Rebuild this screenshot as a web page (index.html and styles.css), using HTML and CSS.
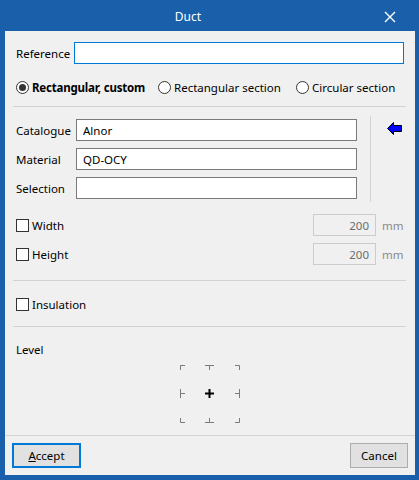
FILE: index.html
```html
<!DOCTYPE html>
<html>
<head>
<meta charset="utf-8">
<link rel="stylesheet" href="styles.css">
</head>
<body>
<div class="window">
  <div class="titlebar">
    <div class="title">Duct</div>
    <div class="close">
      <svg width="12" height="12" viewBox="0 0 12 12"><path d="M1 1 L11 11 M11 1 L1 11" stroke="#fff" stroke-width="1.4" fill="none"/></svg>
    </div>
  </div>
  <div class="content">
    <div class="main">
      <div class="row ref-row">
        <span class="ref-label">Reference</span>
        <div class="input focus"></div>
      </div>
      <div class="radio-row">
        <label class="radio-item w1"><span class="radio checked"><span class="dot"></span></span><b>Rectangular, custom</b></label>
        <label class="radio-item w2"><span class="radio"></span>Rectangular section</label>
        <label class="radio-item"><span class="radio"></span>Circular section</label>
      </div>
      <div class="sep first-sep"></div>
      <div class="group">
        <div class="fields">
          <div class="row"><span class="field-label">Catalogue</span><div class="input field">Alnor</div></div>
          <div class="row"><span class="field-label">Material</span><div class="input field">QD-OCY</div></div>
          <div class="row"><span class="field-label">Selection</span><div class="input field"></div></div>
        </div>
        <div class="vline"></div>
        <svg class="arrow" width="16" height="13" viewBox="0 0 16 13">
          <path d="M0.5 6.5 L6.5 0.5 L6.5 3.5 L14.5 3.5 L14.5 9.5 L6.5 9.5 L6.5 12.5 Z" fill="#0000ff" stroke="#000" stroke-width="1" stroke-linejoin="miter"/>
        </svg>
      </div>
      <div class="row dim-row dim-first">
        <span class="check"></span><span class="check-label">Width</span>
        <div class="spacer"></div>
        <div class="input disabled">200</div><span class="unit">mm</span>
      </div>
      <div class="row dim-row dim-second">
        <span class="check"></span><span class="check-label">Height</span>
        <div class="spacer"></div>
        <div class="input disabled">200</div><span class="unit">mm</span>
      </div>
      <div class="sep sep-dims"></div>
      <div class="ins-row">
        <span class="check"></span><span class="check-label">Insulation</span>
      </div>
      <div class="sep sep-ins"></div>
      <div class="level">Level</div>
      <svg class="marks" width="62" height="60" viewBox="0 0 62 60">
        <g stroke="#7a7a7a" stroke-width="1" fill="none">
          <path d="M1.5 6 L1.5 1.5 L6 1.5"/>
          <path d="M26 1.5 L35 1.5 M30.5 1.5 L30.5 6"/>
          <path d="M56 1.5 L60.5 1.5 L60.5 6"/>
          <path d="M1.5 25 L1.5 34 M1.5 29.5 L6 29.5"/>
          <path d="M60.5 25 L60.5 34 M60.5 29.5 L56 29.5"/>
          <path d="M1.5 54 L1.5 58.5 L6 58.5"/>
          <path d="M26 58.5 L35 58.5 M30.5 58.5 L30.5 54"/>
          <path d="M56 58.5 L60.5 58.5 L60.5 54"/>
        </g>
        <path d="M26 29.5 L35 29.5 M30.5 25 L30.5 34" stroke="#000" stroke-width="2" fill="none"/>
      </svg>
    </div>
    <div class="footer">
      <div class="btn primary"><u>A</u>ccept</div>
      <div class="btn cancel">Cancel</div>
    </div>
  </div>
</div>
</body>
</html>
```
FILE: styles.css
```css
html, body {
  margin: 0;
  padding: 0;
}
body {
  font-family: "Noto Sans", "Liberation Sans", sans-serif;
  font-size: 11.5px;
  color: #000;
}
.window {
  width: 419px;
  height: 480px;
  box-sizing: border-box;
  background: #1a5fa9;
  padding: 0 4px 5px 5px;
  display: flex;
  flex-direction: column;
}
.titlebar {
  height: 31px;
  display: flex;
  align-items: center;
  color: #fff;
}
.title {
  flex: 1;
  text-align: center;
  font-size: 12px;
  padding-left: 2px;
  padding-top: 1px;
}
.close {
  width: 46px;
  display: flex;
  justify-content: center;
  align-items: center;
}
.close svg {
  display: block;
  margin-left: -4px;
  margin-top: 2px;
}
.content {
  flex: 1;
  background: #f0f0f0;
  display: flex;
  flex-direction: column;
}
.main {
  flex: 1;
  padding: 11px 11px 0 11px;
  display: flex;
  flex-direction: column;
}
.row {
  display: flex;
  align-items: center;
  height: 22px;
}
.input {
  box-sizing: border-box;
  height: 22px;
  background: #fff;
  border: 1px solid #7a7a7a;
  display: flex;
  align-items: center;
}
.input.focus {
  flex: 1;
  border-color: #0078d7;
}
.ref-label {
  width: 58px;
}
.radio-row {
  margin-top: 13px;
  height: 20px;
  display: flex;
  align-items: center;
}
.radio-item {
  display: flex;
  align-items: center;
}
.radio-item.w1 { width: 142px; }
.radio-item.w2 { width: 138px; }
.radio-item b {
  font-weight: bold;
  letter-spacing: -0.2px;
}
.radio {
  box-sizing: border-box;
  width: 13px;
  height: 13px;
  border-radius: 50%;
  border: 1px solid #333;
  background: #fff;
  margin-right: 3px;
  display: flex;
  align-items: center;
  justify-content: center;
}
.radio .dot {
  width: 7px;
  height: 7px;
  border-radius: 50%;
  background: #333;
}
.sep {
  height: 1px;
  background: #d3d3d3;
  margin-left: -3px;
  margin-right: -2px;
}
.first-sep { margin-top: 9px; }
.group {
  margin-top: 9px;
  height: 86px;
  display: flex;
}
.fields {
  padding-top: 3px;
  display: flex;
  flex-direction: column;
  gap: 7px;
}
.field-label {
  width: 60px;
}
.input.field {
  width: 281px;
  padding-left: 6px;
}
.vline {
  width: 1px;
  background: #d3d3d3;
  margin-left: 13px;
}
.arrow {
  display: block;
  margin-left: 16px;
  margin-top: 6px;
}
.dim-first { margin-top: 12px; }
.dim-second { margin-top: 7px; }
.check {
  box-sizing: border-box;
  width: 13px;
  height: 13px;
  border: 1px solid #333;
  background: #fff;
  margin-right: 3px;
}
.spacer { flex: 1; }
.input.disabled {
  width: 63px;
  background: #f0f0f0;
  border-color: #cccccc;
  color: #6d6d6d;
  justify-content: flex-end;
  padding-right: 6px;
}
.unit {
  margin-left: 6px;
  color: #8a8a8a;
  width: 22px;
}
.sep-dims { margin-top: 15px; }
.ins-row {
  margin-top: 13px;
  height: 20px;
  display: flex;
  align-items: center;
}
.sep-ins { margin-top: 12px; }
.level {
  margin-top: 15px;
  line-height: 16px;
}
.marks {
  display: block;
  margin-top: 6px;
  margin-left: 163px;
}
.footer {
  height: 40px;
  box-sizing: border-box;
  border-top: 1px solid #d3d3d3;
  padding: 7px 7px 0 7px;
  display: flex;
  justify-content: space-between;
  align-items: flex-start;
}
.btn {
  box-sizing: border-box;
  height: 25px;
  background: #e1e1e1;
  border: 1px solid #adadad;
  display: flex;
  align-items: center;
  justify-content: center;
}
.btn.primary {
  width: 69px;
  border: 2px solid #0078d7;
}
.btn.cancel {
  width: 58px;
}
```
